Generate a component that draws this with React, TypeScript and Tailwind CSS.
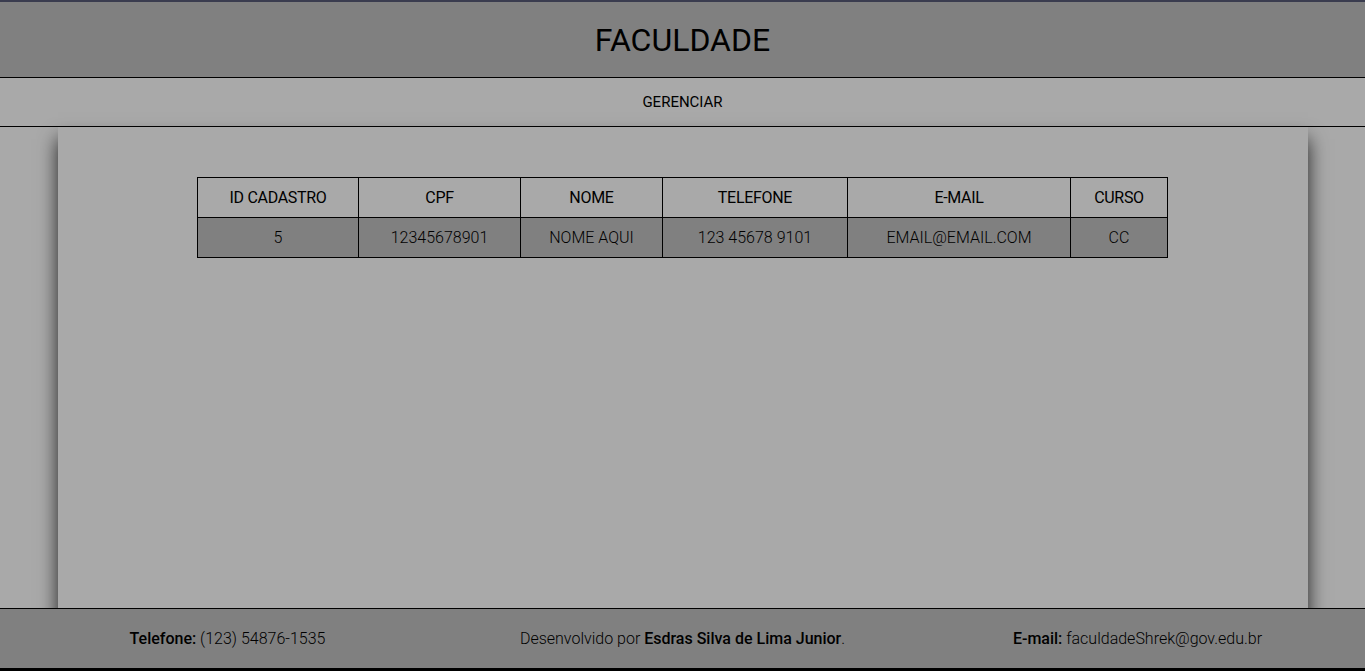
import React from 'react'

const columns = [
  { label: 'ID CADASTRO', width: 'w-[161px]' },
  { label: 'CPF', width: 'w-[162px]' },
  { label: 'NOME', width: 'w-[142px]' },
  { label: 'TELEFONE', width: 'w-[185px]' },
  { label: 'E-MAIL', width: 'w-[223px]' },
  { label: 'CURSO', width: 'w-[97px]' },
]

const alunos = [
  { id: 5, cpf: '12345678901', nome: 'NOME AQUI', telefone: '123 45678 9101', email: 'EMAIL@EMAIL.COM', curso: 'CC' },
]

const App = () => {
  return (
    <div className="w-full h-[671px] flex flex-col bg-[#a9a9a9] text-black overflow-hidden font-['Roboto',sans-serif]">
      <header className="h-[78px] shrink-0 flex items-center justify-center bg-[#808080] border-t-2 border-[#3a3c4f] border-b border-b-black">
        <h1 className="text-[32px] leading-none pt-[1px]">FACULDADE</h1>
      </header>

      <nav className="h-[49px] shrink-0 flex items-center justify-center bg-[#a9a9a9] border-b border-black">
        <a className="text-[15px]">GERENCIAR</a>
      </nav>

      <main className="flex-1 min-h-0 flex justify-center">
        <div className="w-[1250px] h-[520px] shrink-0 bg-[#a9a9a9] shadow-[0_12px_18px_rgba(0,0,0,0.8)] pt-[50px] flex justify-center">
          <table className="border-collapse h-fit self-start">
            <thead>
              <tr className="h-10">
                {columns.map(col =>
                  <th key={col.label} className={`${col.width} border border-black font-normal text-base tracking-[-0.3px]`}>{col.label}</th>
                )}
              </tr>
            </thead>
            <tbody>
              {alunos.map(aluno =>
                <tr key={aluno.id} className="h-10 bg-[#808080] font-light text-base text-center">
                  <td className="border border-black">{aluno.id}</td>
                  <td className="border border-black">{aluno.cpf}</td>
                  <td className="border border-black">{aluno.nome}</td>
                  <td className="border border-black">{aluno.telefone}</td>
                  <td className="border border-black">{aluno.email}</td>
                  <td className="border border-black">{aluno.curso}</td>
                </tr>
              )}
            </tbody>
          </table>
        </div>
      </main>

      <footer className="relative z-10 h-[63px] shrink-0 grid grid-cols-3 items-center bg-[#808080] border-t border-black border-b-[3px] border-b-black text-base">
        <p className="text-center font-light"><span className="font-medium">Telefone:</span> (123) 54876-1535</p>
        <p className="text-center font-light">Desenvolvido por <span className="font-medium">Esdras Silva de Lima Junior</span>.</p>
        <p className="text-center font-light"><span className="font-medium">E-mail:</span> faculdadeShrek@gov.edu.br</p>
      </footer>
    </div>
  )
}

export default App
